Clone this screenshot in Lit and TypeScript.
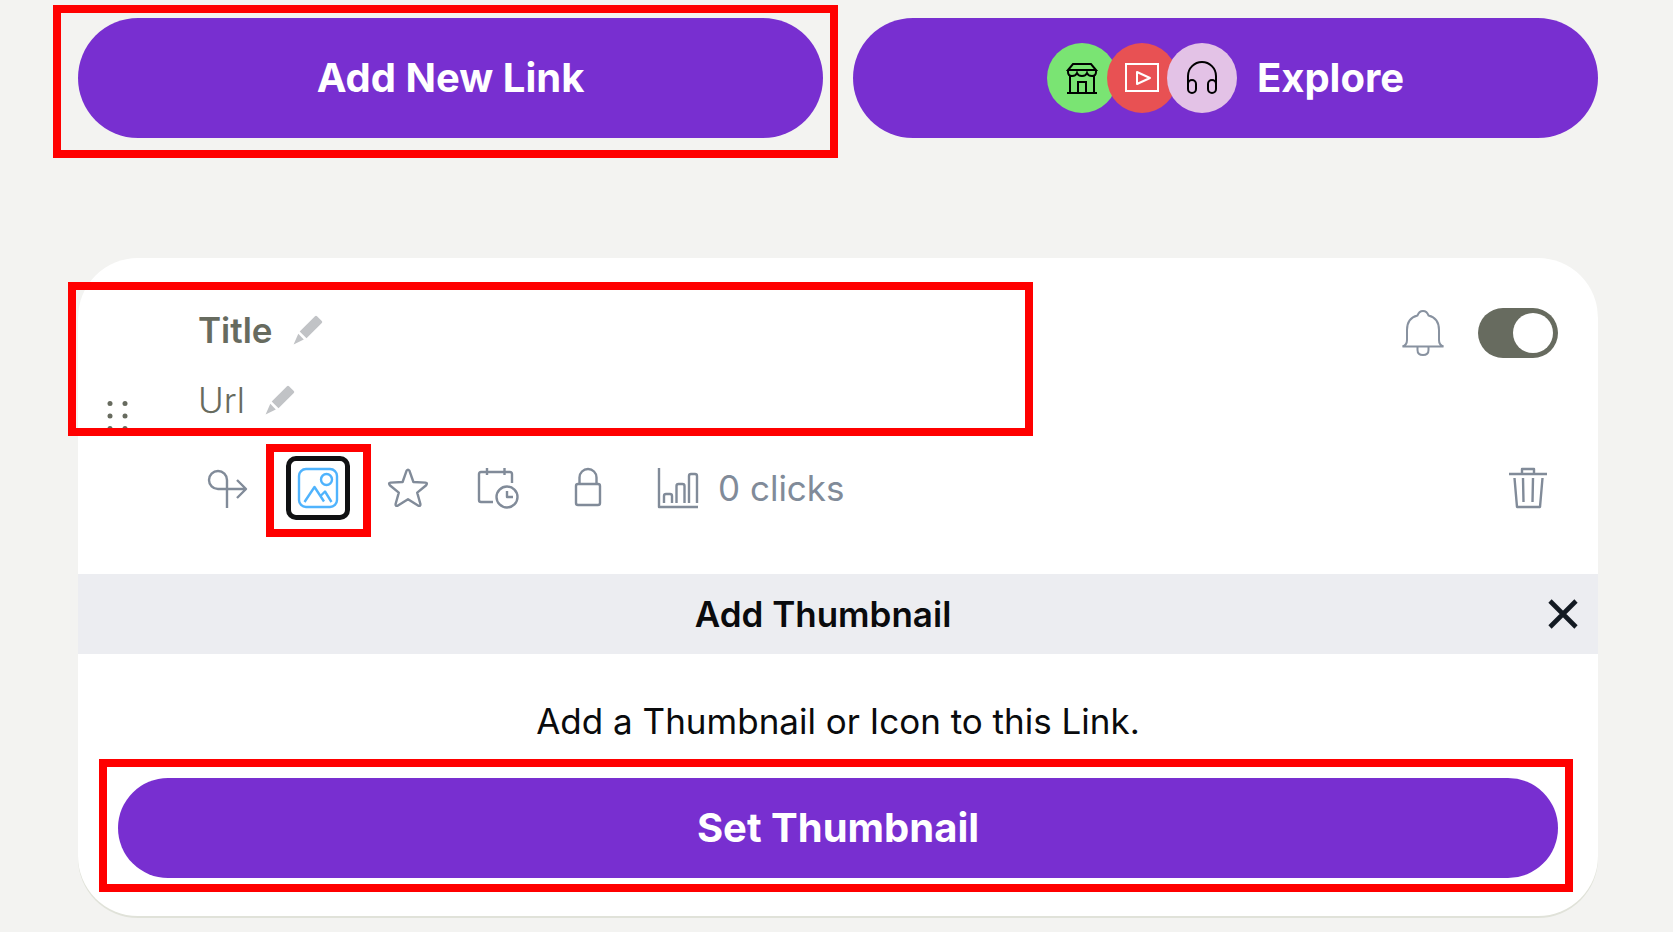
import { LitElement, html, css, svg } from "lit";
import { customElement, state } from "lit/decorators.js";

const pencil = html`<svg class="pencil" viewBox="0 0 30 30" aria-hidden="true">
  <path d="M22 1.2q1-1 2 0l4.800 4.800q1 1 0 2L13.500 23.300 6.700 16.500z" />
  <path d="M5.300 18.700 10.800 24.600 .6 29.400z" />
</svg>`;

const tools = [
  {
    label: "Redirect",
    art: svg`<path d="M19 40V12A9 9 0 1 0 10 21H38M29 12l9 9-9 9" />`,
  },
  {
    label: "Thumbnail",
    active: true,
    art: svg`<rect x="1" y="1" width="38" height="38" rx="7" />
      <circle cx="28.500" cy="11.500" r="5.500" />
      <path d="M6.500 34 16.500 19 26 33.500M22.500 28 27 23.500 33.500 34" />`,
  },
  {
    label: "Priority",
    art: svg`<path d="M18.600 2.600q1.400-2 2.800 0l4 11.400 12 .6q2.600.4.8 2.600l-9 7.400 3.200 11.400q.4 2.400-2 1.800L20 31.200 9.600 37.800q-2.400.6-2-1.800l3.200-11.400-9-7.400q-1.800-2.200.8-2.600l12-.6z" />`,
  },
  {
    label: "Schedule",
    art: svg`<path d="M34 15V6q0-2-2-2H3Q1 4 1 6v26q0 2 2 2h12M9 0v7M26.500 0v7" />
      <circle cx="29" cy="29" r="10.500" />
      <path d="M29 23v6h6" />`,
  },
  {
    label: "Lock",
    art: svg`<rect x="8" y="16" width="24" height="21" rx="2" />
      <path d="M11.500 16V9.500a8.500 8.500 0 0 1 17 0V16" />`,
  },
];

@customElement("app-root")
export class AppRoot extends LitElement {
  @state() private enabled = true;

  static styles = css`
    :host {
      display: block;
      box-sizing: border-box;
      min-height: 100vh;
      padding: 18px 75px 14px 78px;
      background: #f3f3f1;
      color: #0a0b0d;
      font-family: Inter, "Liberation Sans", sans-serif;
      font-optical-sizing: none;
      font-size: 35px;
      line-height: 50px;
    }
    * {
      box-sizing: border-box;
    }
    button {
      display: flex;
      align-items: center;
      justify-content: center;
      margin: 0;
      padding: 0;
      border: 0;
      background: none;
      color: inherit;
      font: inherit;
      cursor: pointer;
    }
    svg {
      display: block;
      flex: none;
      overflow: visible;
    }
    h2,
    p {
      margin: 0;
    }
    .actions {
      display: grid;
      grid-template-columns: 1fr 1fr;
      gap: 30px;
      margin-bottom: 120px;
    }
    .marked {
      position: relative;
    }
    .marked::after {
      content: "";
      position: absolute;
      border: 8px solid #ff0000;
      pointer-events: none;
    }
    .mark-add::after {
      inset: -13px -15px -20px -25px;
    }
    .mark-fields::after {
      inset: -23px 0 -5px -10px;
    }
    .mark-tool::after {
      inset: -12px -21px -17px -20px;
    }
    .mark-set::after {
      inset: -19px -15px -14px -19px;
    }
    .primary {
      width: 100%;
      height: 120px;
      border-radius: 60px;
      background: #782fd0;
      color: #ffffff;
      font-size: 40px;
      font-weight: 700;
    }
    .set {
      height: 100px;
      border-radius: 50px;
    }
    .explore {
      gap: 20px;
    }
    .badges {
      display: flex;
    }
    .badge {
      display: grid;
      place-items: center;
      width: 70px;
      height: 70px;
      border-radius: 50%;
    }
    .badge + .badge {
      margin-left: -10px;
    }
    .badge svg {
      width: 34px;
      height: 34px;
      fill: none;
      stroke: #000000;
      stroke-width: 2;
    }
    .green {
      background: #7ae473;
    }
    .red {
      background: #e85153;
    }
    .pink {
      background: #e3c2e6;
    }
    .badge.red svg {
      stroke: #ffffff;
    }
    .card {
      border-radius: 60px;
      background: #ffffff;
      box-shadow: 0 2px 0 #e0e2d9;
      padding-top: 47px;
    }
    .top {
      display: flex;
      align-items: flex-start;
      justify-content: space-between;
      padding-right: 40px;
      margin-bottom: 25px;
    }
    .fields {
      display: flex;
      align-items: flex-end;
      flex: 0 1 955px;
    }
    .handle {
      width: 120px;
      padding-left: 29px;
      justify-content: flex-start;
      cursor: grab;
    }
    .handle svg {
      width: 21px;
      height: 30px;
      fill: #676b5f;
    }
    .lines {
      display: flex;
      flex-direction: column;
      gap: 20px;
      padding-bottom: 6px;
      color: #676b5f;
    }
    .line {
      display: flex;
      align-items: center;
      gap: 20px;
    }
    .title {
      font-weight: 600;
    }
    .url {
      font-weight: 300;
    }
    .pencil {
      width: 30px;
      height: 30px;
      fill: #c1c3c6;
    }
    .controls {
      display: flex;
      align-items: center;
      gap: 33px;
      padding-top: 3px;
    }
    .bell {
      width: 44px;
      height: 48px;
      fill: none;
      stroke: #8892a0;
      stroke-width: 2;
    }
    .switch {
      appearance: none;
      display: flex;
      width: 80px;
      height: 50px;
      margin: 0;
      padding: 5px;
      border-radius: 25px;
      background: #c1c3c6;
      cursor: pointer;
    }
    .switch::before {
      content: "";
      width: 40px;
      height: 40px;
      border-radius: 50%;
      background: #ffffff;
    }
    .switch:checked {
      justify-content: flex-end;
      background: #676b5f;
    }
    .tools {
      display: flex;
      align-items: center;
      gap: 26px;
      padding: 0 38px 0 118px;
      margin-bottom: 54px;
      color: #818b99;
    }
    .tool {
      width: 64px;
      height: 64px;
      border-radius: 10px;
    }
    .tool svg,
    .stats svg {
      width: 40px;
      height: 40px;
      fill: none;
      stroke: currentColor;
      stroke-width: 2.4;
      stroke-linejoin: round;
    }
    .active {
      border: 5px solid #101113;
      color: #4fb3fd;
    }
    .stats {
      gap: 20px;
      padding-left: 12px;
    }
    .delete {
      margin-left: auto;
    }
    .panel-head {
      display: flex;
      align-items: center;
      height: 80px;
      padding: 0 20px;
      background: #ecedf1;
    }
    .panel-title {
      flex: 1;
      font-size: 35px;
      font-weight: 600;
      text-align: center;
    }
    .close svg {
      width: 30px;
      height: 30px;
      stroke: #131a22;
      stroke-width: 4.6;
    }
    .panel {
      padding: 42px 40px 38px;
      text-align: center;
    }
    .hint {
      margin-bottom: 32px;
    }
  `;

  private toggle(e: Event) {
    this.enabled = (e.target as HTMLInputElement).checked;
  }

  render() {
    return html`
      <div class="actions">
        <div class="marked mark-add">
          <button class="primary">Add New Link</button>
        </div>
        <button class="primary explore">
          <span class="badges">
            <span class="badge green">
              <svg viewBox="0 0 34 34">
                <path d="M2 32H32M5 14V32M29 14V32M13 32V21H21V32M8 3H26L31 9H3zM3 9V11Q3 15 7 15 11 15 12 12 13 15 17 15 21 15 22 12 23 15 27 15 31 15 31 11V9" />
              </svg>
            </span>
            <span class="badge red">
              <svg viewBox="0 0 34 34">
                <rect x="1" y="3" width="32" height="27" />
                <path d="M12 11V23L25 17z" stroke-linejoin="round" />
              </svg>
            </span>
            <span class="badge pink">
              <svg viewBox="0 0 34 34">
                <path d="M3 26V15A14 14 0 0 1 31 15V26" />
                <rect x="3" y="19" width="8" height="13" rx="4" />
                <rect x="23" y="19" width="8" height="13" rx="4" />
              </svg>
            </span>
          </span>
          <span>Explore</span>
        </button>
      </div>

      <section class="card">
        <div class="top">
          <div class="fields marked mark-fields">
            <button class="handle" aria-label="Reorder">
              <svg viewBox="0 0 21 30">
                ${[2.5, 15, 27.5].map(
                  (y) => svg`<circle cx="3" cy=${y} r="2.500" /><circle cx="18" cy=${y} r="2.500" />`
                )}
              </svg>
            </button>
            <div class="lines">
              <div class="line">
                <span class="title">Title</span>
                <button aria-label="Edit title">${pencil}</button>
              </div>
              <div class="line">
                <span class="url">Url</span>
                <button aria-label="Edit url">${pencil}</button>
              </div>
            </div>
          </div>
          <div class="controls">
            <button aria-label="Notifications">
              <svg class="bell" viewBox="0 0 44 48">
                <path d="M1.500 37.500H42.500Q38 36 38 31V21Q38 9 27.500 6.500 26 2 22 2 18 2 16.500 6.500 6 9 6 21V31Q6 36 1.500 37.500zM16.500 37.500V41Q16.500 46 22 46 27.500 46 27.500 41V37.500" />
              </svg>
            </button>
            <input
              class="switch"
              type="checkbox"
              role="switch"
              aria-label="Link enabled"
              .checked=${this.enabled}
              @change=${this.toggle}
            />
          </div>
        </div>

        <div class="tools">
          ${tools.map((t) =>
            t.active
              ? html`<div class="marked mark-tool">
                  <button class="tool active" aria-label=${t.label}>
                    <svg viewBox="0 0 40 40">${t.art}</svg>
                  </button>
                </div>`
              : html`<button class="tool" aria-label=${t.label}>
                  <svg viewBox="0 0 40 40">${t.art}</svg>
                </button>`
          )}
          <button class="stats">
            <svg viewBox="0 0 40 40">
              <path d="M1 0V39H40M6 35V28Q6 26 8 26H12Q14 26 14 28V35M18.500 35V18Q18.500 16 20.500 16H24.500Q26.500 16 26.500 18V35M31 35V8Q31 6 33 6H37Q39 6 39 8V35" />
            </svg>
            <span>0 clicks</span>
          </button>
          <button class="tool delete" aria-label="Delete">
            <svg viewBox="0 0 40 40">
              <path d="M1 6H39M14 6V1H26V6M6.500 10 9 39H32L34.500 10M15 10 15.500 34M25 10 24.500 34" />
            </svg>
          </button>
        </div>

        <div class="panel-head">
          <h2 class="panel-title">Add Thumbnail</h2>
          <button class="close" aria-label="Close">
            <svg viewBox="0 0 30 30"><path d="M2 2 28 28M28 2 2 28" /></svg>
          </button>
        </div>
        <div class="panel">
          <p class="hint">Add a Thumbnail or Icon to this Link.</p>
          <div class="marked mark-set">
            <button class="primary set">Set Thumbnail</button>
          </div>
        </div>
      </section>
    `;
  }
}
